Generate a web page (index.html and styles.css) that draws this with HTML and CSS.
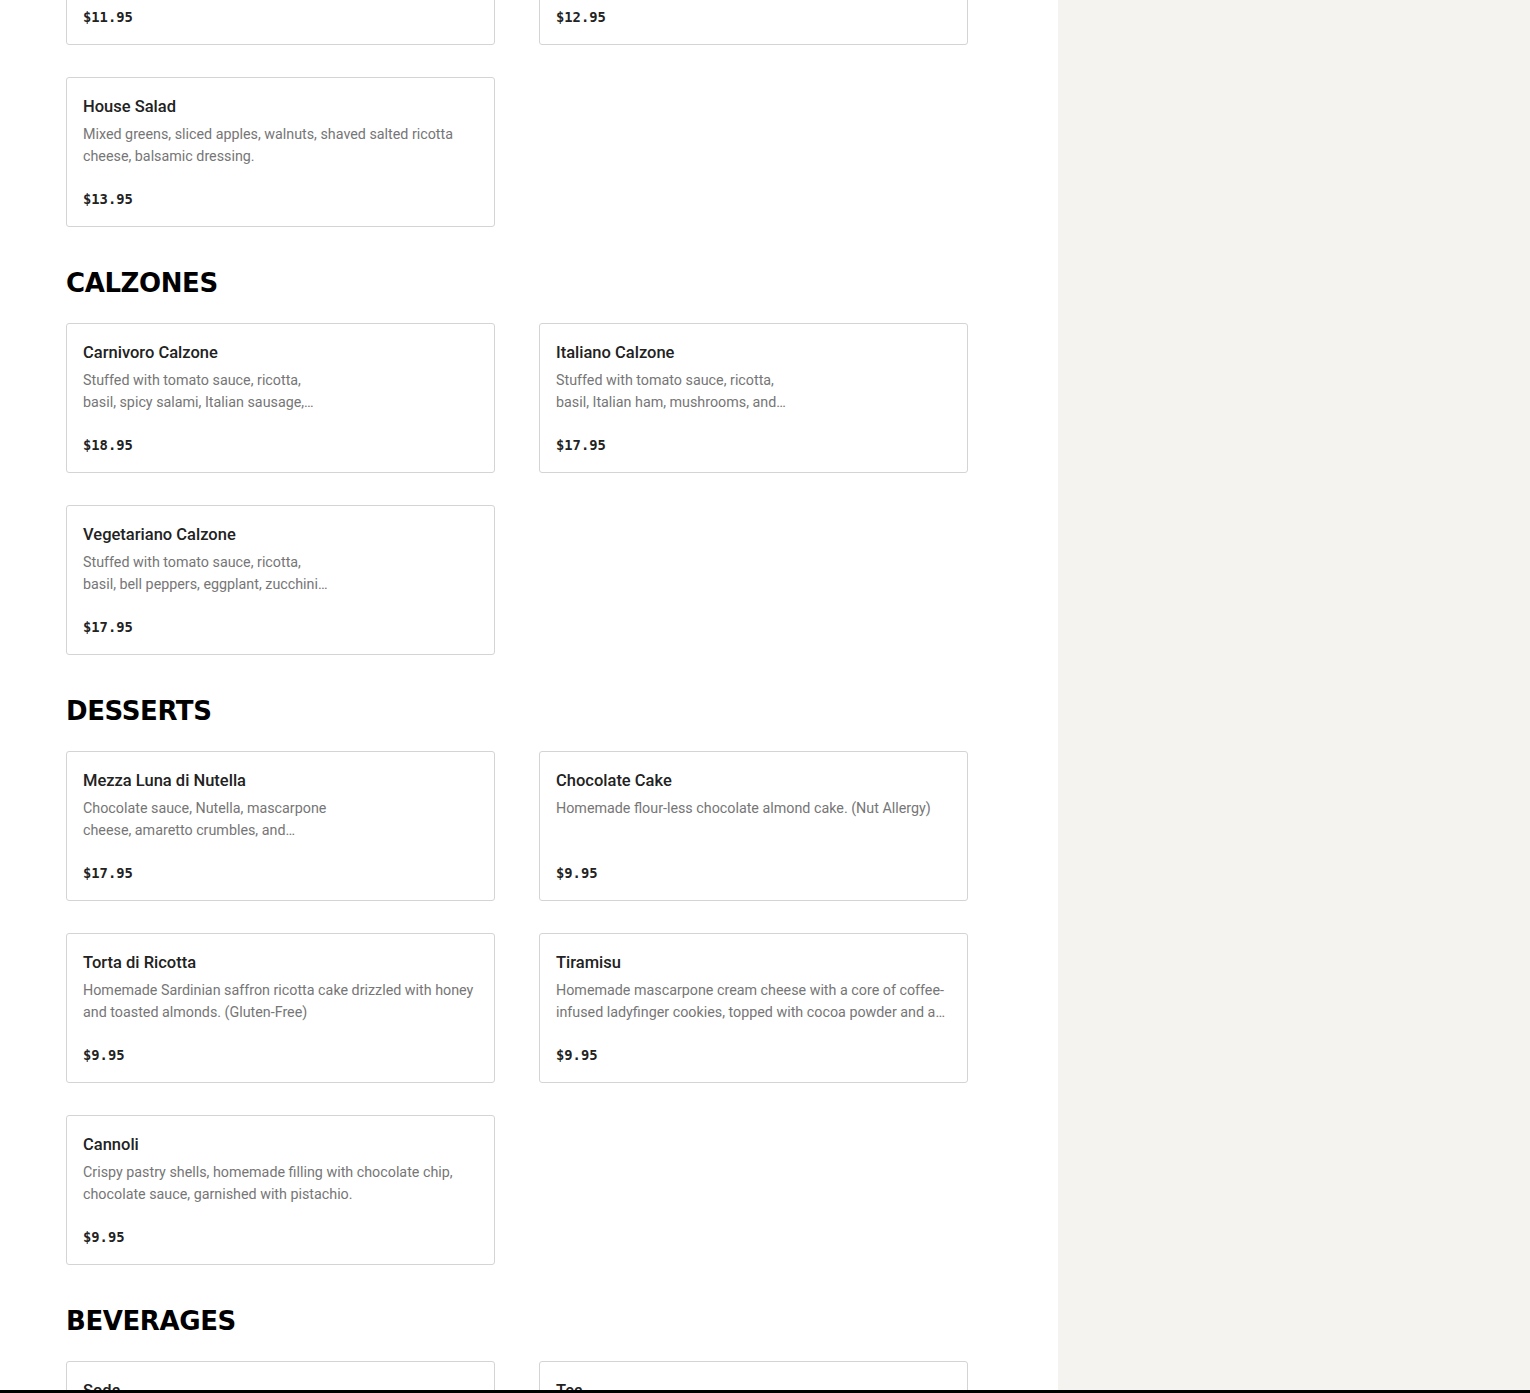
FILE: index.html
```html
<!DOCTYPE html>
<html lang="en">

<head>
    <meta charset="UTF-8">
    <meta name="viewport" content="width=device-width, initial-scale=1.0">
    <title>Menu</title>
    <link rel="stylesheet" href="styles.css">
</head>

<body>
    <div class="page">
        <main class="menu">
            <section class="menu-section">
                <h2>Salads</h2>
                <div class="items">
                    <div class="item">
                        <div class="item-name">Caesar Salad</div>
                        <div class="item-desc">Romaine, croutons, shaved parmigiano, house caesar dressing.</div>
                        <div class="item-price">$11.95</div>
                    </div>
                    <div class="item">
                        <div class="item-name">Caprese Salad</div>
                        <div class="item-desc">Fresh mozzarella, tomatoes, basil, extra virgin olive oil.</div>
                        <div class="item-price">$12.95</div>
                    </div>
                    <div class="item">
                        <div class="item-name">House Salad</div>
                        <div class="item-desc">Mixed greens, sliced apples, walnuts, shaved salted ricotta cheese, balsamic dressing.</div>
                        <div class="item-price">$13.95</div>
                    </div>
                </div>
            </section>

            <section class="menu-section">
                <h2>Calzones</h2>
                <div class="items">
                    <div class="item">
                        <div class="item-name">Carnivoro Calzone</div>
                        <div class="item-desc lines">Stuffed with tomato sauce, ricotta,
basil, spicy salami, Italian sausage,
ham and mozzarella.</div>
                        <div class="item-price">$18.95</div>
                    </div>
                    <div class="item">
                        <div class="item-name">Italiano Calzone</div>
                        <div class="item-desc lines">Stuffed with tomato sauce, ricotta,
basil, Italian ham, mushrooms, and
mozzarella.</div>
                        <div class="item-price">$17.95</div>
                    </div>
                    <div class="item">
                        <div class="item-name">Vegetariano Calzone</div>
                        <div class="item-desc lines">Stuffed with tomato sauce, ricotta,
basil, bell peppers, eggplant, zucchini
and mozzarella.</div>
                        <div class="item-price">$17.95</div>
                    </div>
                </div>
            </section>

            <section class="menu-section">
                <h2>Desserts</h2>
                <div class="items">
                    <div class="item">
                        <div class="item-name">Mezza Luna di Nutella</div>
                        <div class="item-desc lines">Chocolate sauce, Nutella, mascarpone
cheese, amaretto crumbles, and
powdered sugar.</div>
                        <div class="item-price">$17.95</div>
                    </div>
                    <div class="item">
                        <div class="item-name">Chocolate Cake</div>
                        <div class="item-desc">Homemade flour-less chocolate almond cake. (Nut Allergy)</div>
                        <div class="item-price">$9.95</div>
                    </div>
                    <div class="item">
                        <div class="item-name">Torta di Ricotta</div>
                        <div class="item-desc">Homemade Sardinian saffron ricotta cake drizzled with honey and toasted almonds. (Gluten-Free)</div>
                        <div class="item-price">$9.95</div>
                    </div>
                    <div class="item">
                        <div class="item-name">Tiramisu</div>
                        <div class="item-desc">Homemade mascarpone cream cheese with a core of coffee-infused ladyfinger cookies, topped with cocoa powder and a dusting of sugar.</div>
                        <div class="item-price">$9.95</div>
                    </div>
                    <div class="item">
                        <div class="item-name">Cannoli</div>
                        <div class="item-desc">Crispy pastry shells, homemade filling with chocolate chip, chocolate sauce, garnished with pistachio.</div>
                        <div class="item-price">$9.95</div>
                    </div>
                </div>
            </section>

            <section class="menu-section">
                <h2>Beverages</h2>
                <div class="items">
                    <div class="item">
                        <div class="item-name">Soda</div>
                        <div class="item-desc">Coke, Diet Coke, Sprite.</div>
                        <div class="item-price">$2.95</div>
                    </div>
                    <div class="item">
                        <div class="item-name">Tea</div>
                        <div class="item-desc">Hot or iced.</div>
                        <div class="item-price">$2.95</div>
                    </div>
                </div>
            </section>
        </main>

        <aside class="sidebar"></aside>
    </div>

    <div class="bottom-bar"></div>
</body>

</html>
```

FILE: styles.css
```css
body {
    margin: 0;
    font-family: Roboto, "Liberation Sans", sans-serif;
    color: #222;
    background: white;
    overflow: hidden;
}

.page {
    display: flex;
    min-height: 100vh;
}

.menu {
    width: 1058px;
    flex-shrink: 0;
    box-sizing: border-box;
    padding: 0 90px 0 66px;
    display: flex;
    flex-direction: column;
    margin-top: -201px;
}

.menu-section {
    padding-top: 40px;
}

.menu-section h2 {
    margin: 0 0 24px;
    height: 32px;
    line-height: 32px;
    font-family: "DejaVu Sans", sans-serif;
    font-weight: bold;
    font-size: 26px;
    text-transform: uppercase;
    letter-spacing: -0.4px;
    color: #000;
}

.items {
    display: grid;
    grid-template-columns: 429px 429px;
    column-gap: 44px;
    row-gap: 32px;
}

.item {
    border: 1px solid #d4d4d4;
    border-radius: 3px;
    padding: 17px 16px 16px;
    height: 150px;
    box-sizing: border-box;
}

.item-name {
    font-size: 16.5px;
    line-height: 24px;
    font-weight: 500;
    color: #222;
}

.item-desc {
    margin-top: 4px;
    font-size: 14.3px;
    line-height: 22px;
    height: 44px;
    color: #767676;
    overflow: hidden;
    display: -webkit-box;
    -webkit-line-clamp: 2;
    -webkit-box-orient: vertical;
}

.item-desc.lines {
    white-space: pre-line;
}

.item-price {
    margin-top: 22px;
    font-family: "DejaVu Sans Mono", monospace;
    font-weight: bold;
    font-size: 13.8px;
    line-height: 20px;
    color: #222;
}

.sidebar {
    flex: 1;
    background: #f4f3f0;
}

.bottom-bar {
    position: fixed;
    left: 0;
    right: 0;
    bottom: 0;
    height: 3px;
    background: #000;
}
```
